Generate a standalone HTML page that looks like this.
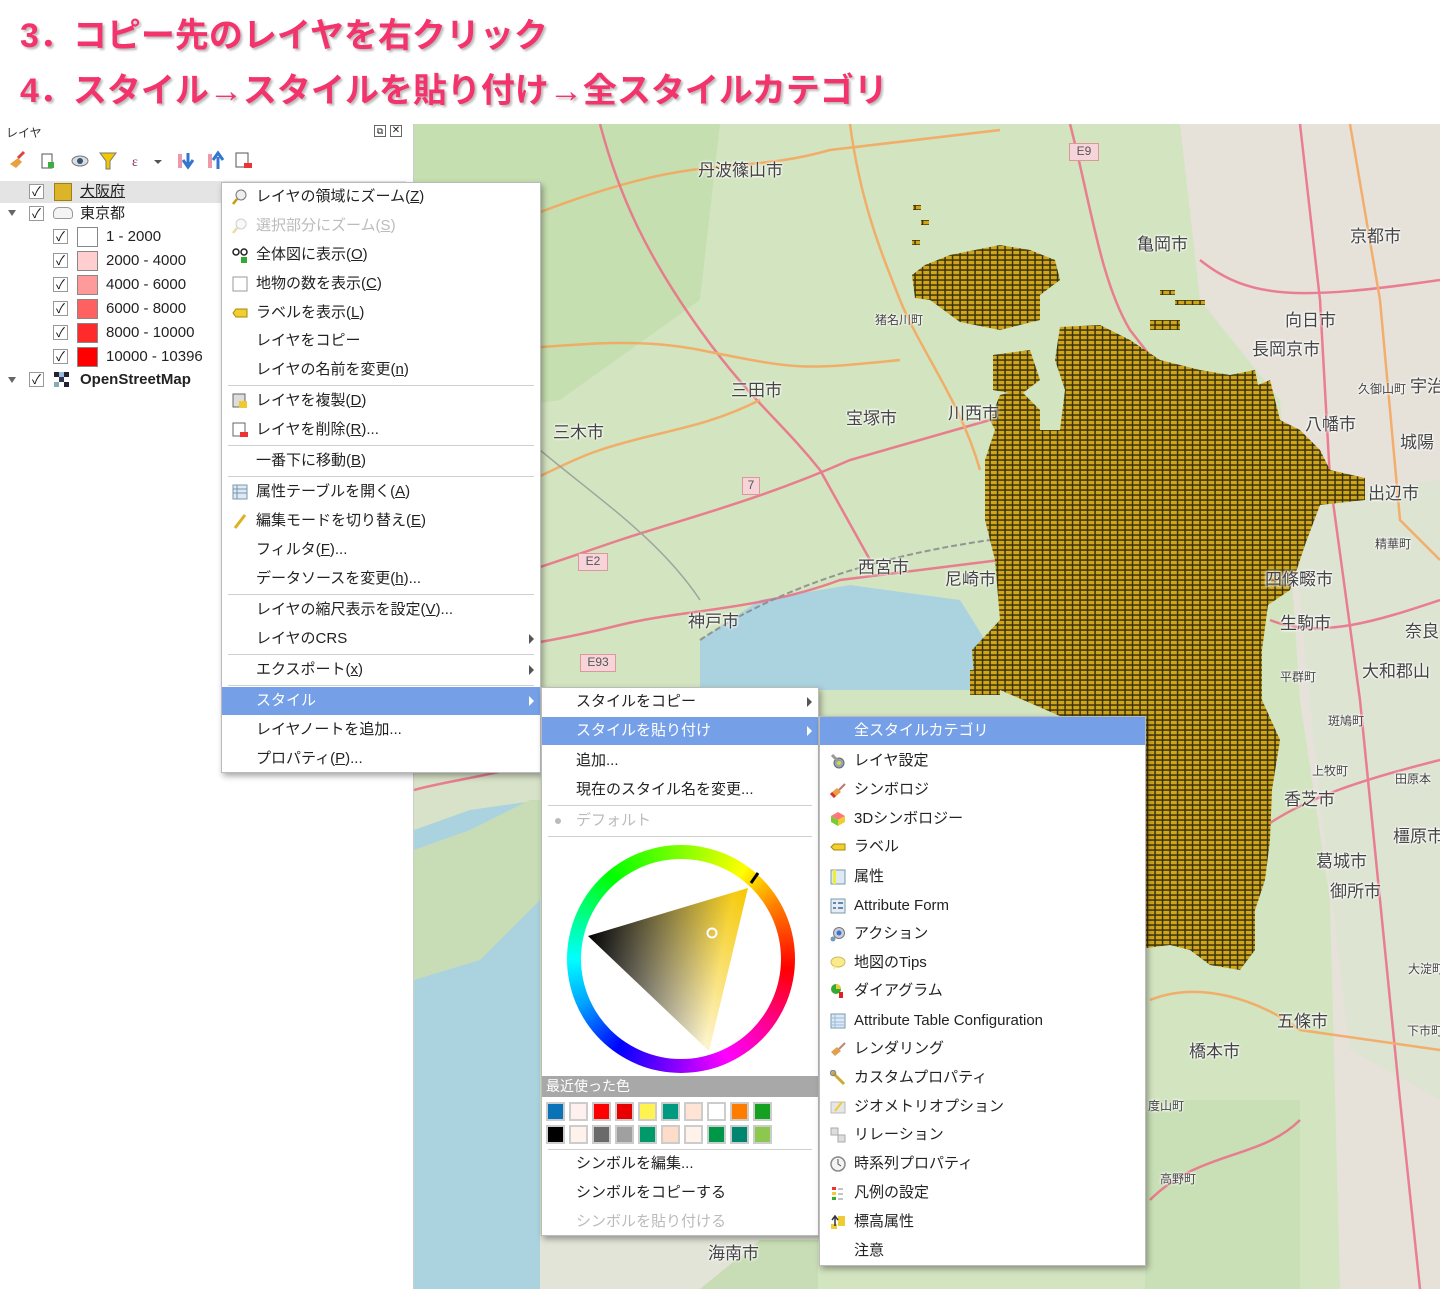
<!DOCTYPE html>
<html><head><meta charset="utf-8">
<style>
*{margin:0;padding:0;box-sizing:border-box}
body{width:1440px;height:1289px;position:relative;overflow:hidden;background:#fff;font-family:"Liberation Sans","Noto Sans CJK JP",sans-serif;color:#222}
.h{position:absolute;left:20px;font-size:34px;font-weight:bold;color:#f3336c;text-shadow:2px 2px 2px #bbb,-1px -1px 0 #fff;letter-spacing:0;font-family:"Liberation Sans","Noto Sans CJK JP",sans-serif}
.abs{position:absolute}
.panel{position:absolute;left:0;top:124px;width:414px;height:1165px;background:#fff;border-right:1px solid #ccc}
.ptitle{position:absolute;left:6px;top:124px;font-size:12px;color:#333}
.row{position:absolute;font-size:15px;height:22px;line-height:22px;white-space:nowrap}
.cb{position:absolute;width:15px;height:15px;border:1px solid #999;background:#fff;font-size:13px;line-height:13px;text-align:center;color:#111}
.sw{position:absolute;width:21px;height:20px;border:1px solid #888}
.menu{position:absolute;background:#fff;border:1px solid #bbb;box-shadow:2px 3px 6px rgba(0,0,0,.35)}
.mi{position:absolute;left:0;right:0;height:28px;line-height:28px;font-size:15px;white-space:nowrap;color:#222}
.mi span{position:absolute;left:34px}
.dis{color:#bbb}
.hl{background:#75a0e8;color:#fff}
.sep{position:absolute;left:6px;right:6px;height:1px;background:#cfcfcf}
.arr{position:absolute;right:6px;top:9px;width:0;height:0;border-left:5px solid #555;border-top:5px solid transparent;border-bottom:5px solid transparent}
.hl .arr{border-left-color:#fff}
.ic{position:absolute;left:10px;top:6px;width:16px;height:16px}
.lbl{position:absolute;font-size:17px;color:#444;text-shadow:0 0 3px #fff,0 0 3px #fff,0 0 2px #fff;white-space:nowrap}
.sl{font-size:12px}
.sq{position:absolute;width:19px;height:19px;border:2px solid #ccc}
</style></head><body>
<div class="h" style="top:8px">3．コピー先のレイヤを右クリック</div>
<div class="h" style="top:63px">4．スタイル→スタイルを貼り付け→全スタイルカテゴリ</div>

<!-- map -->
<svg class="abs" style="left:414px;top:124px" width="1026" height="1165" viewBox="414 124 1026 1165">
<defs>
<pattern id="g" x="0" y="0" width="7.5" height="5" patternUnits="userSpaceOnUse">
<rect width="7.5" height="5" fill="#3b3310"/><rect x="0.8" y="0.8" width="6" height="3.5" fill="#d0a618"/>
</pattern>
</defs>
<rect x="414" y="124" width="1026" height="1165" fill="#d3e4c0"/>
<path d="M414 124 L720 124 L700 300 L560 400 L414 420Z" fill="#c6dfb0"/>
<path d="M1180 124 L1440 124 L1440 1289 L1340 1289 L1330 900 L1300 700 L1280 400 L1200 300Z" fill="#e6e2da"/>
<path d="M1290 500 L1440 480 L1440 1100 L1350 1050 L1320 800Z" fill="#dde4d2"/>
<path d="M700 640 L760 600 L850 585 L960 600 L985 640 L985 690 L820 690 L700 690Z" fill="#aad3df"/>
<path d="M414 800 L440 780 L520 770 L540 760 L540 1289 L414 1289Z" fill="#aad3df"/>
<path d="M414 770 L470 775 L520 765 L540 772 L540 800 L470 810 L414 830Z" fill="#d8e2c8"/>
<path d="M414 850 L470 830 L530 800 L540 800 L540 900 L480 960 L414 980Z" fill="#c8ddb5"/>
<path d="M540 1235 L818 1235 L818 1289 L540 1289Z" fill="#e3e4d8"/>
<path d="M760 1240 L818 1240 L818 1289 L700 1289Z" fill="#c8ddb5"/>
<path d="M1145 1100 L1300 1100 L1300 1289 L1145 1289Z" fill="#c9dfb6"/>
<g fill="none" stroke-width="2.5" opacity="0.85">
<path d="M414 260 C500 230 560 200 640 180 S760 170 830 150 L1000 130" stroke="#f6a55a"/>
<path d="M600 124 C620 200 650 260 700 330 S780 420 820 470 L870 560" stroke="#ec6c86"/>
<path d="M414 600 C480 590 560 560 620 540 S760 500 850 460 L990 420" stroke="#ec6c86"/>
<path d="M414 660 C500 650 560 640 620 625 S760 610 840 580 L1000 560" stroke="#ec6c86"/>
<path d="M414 500 C480 520 540 470 600 450 S700 430 760 400" stroke="#f6a55a"/>
<path d="M1070 124 C1090 200 1100 280 1130 330 L1200 420" stroke="#ec6c86"/>
<path d="M1200 260 C1250 300 1300 300 1440 280" stroke="#ec6c86"/>
<path d="M1300 124 L1320 300 L1330 480 L1360 700 L1380 900 L1400 1100 L1420 1289" stroke="#ec6c86"/>
<path d="M1260 830 C1300 800 1360 780 1440 760" stroke="#ec6c86"/>
<path d="M1270 620 C1320 640 1380 620 1440 600" stroke="#ec6c86"/>
<path d="M1150 1000 C1200 980 1260 1000 1300 1030 L1440 1050" stroke="#f6a55a"/>
<path d="M1150 1200 C1200 1150 1260 1160 1300 1120" stroke="#ec6c86"/>
<path d="M850 124 C860 200 880 250 900 300 S960 400 980 470" stroke="#f6a55a"/>
<path d="M414 350 C500 360 600 330 700 350 S800 370 900 360" stroke="#f6a55a"/>
<path d="M414 790 C450 780 500 775 540 760" stroke="#ec6c86"/>
<path d="M540 450 C600 500 660 540 700 600" stroke="#999" stroke-width="1.5"/>
<path d="M700 640 C760 600 850 560 990 540" stroke="#888" stroke-width="2" stroke-dasharray="6 3"/>
<path d="M1350 124 L1380 300 L1400 520 L1440 560" stroke="#f6a55a"/>
</g>
<g fill="url(#g)">
<path d="M985 460 L995 430 L1060 430 L1065 390 L1055 360 L1060 327 L1100 325 L1130 340 L1160 360 L1200 370 L1230 375 L1255 370 L1258 385 L1270 380 L1280 420 L1300 430 L1320 450 L1330 470 L1365 478 L1365 500 L1320 505 L1305 545 L1290 590 L1268 605 L1262 650 L1262 700 L1280 740 L1272 790 L1270 840 L1265 880 L1255 910 L1255 950 L1240 970 L1210 965 L1190 950 L1170 945 L1146 948 L1146 716 L1060 716 L1000 690 L975 690 L972 650 L1000 620 L995 560 L985 520Z"/>
<path d="M912 275 L925 265 L950 255 L1000 245 L1030 250 L1055 260 L1060 280 L1040 295 L1040 320 L1000 330 L960 322 L930 300 L915 298Z"/>
<path d="M993 355 L1030 350 L1040 380 L1020 395 L993 390Z"/>
<path d="M1000 395 L1020 390 L1040 410 L1040 430 L1000 440 L990 420Z"/>
<rect x="913" y="205" width="8" height="5"/><rect x="921" y="220" width="8" height="5"/><rect x="912" y="240" width="8" height="5"/>
<rect x="1160" y="290" width="15" height="5"/><rect x="1175" y="300" width="30" height="5"/><rect x="1150" y="320" width="30" height="10"/>
<rect x="970" y="670" width="30" height="25"/>
</g>
</svg>

<div class="lbl" style="left:698px;top:156px">丹波篠山市</div>
<div class="lbl" style="left:1137px;top:230px">亀岡市</div>
<div class="lbl" style="left:1350px;top:222px">京都市</div>
<div class="lbl" style="left:1285px;top:306px">向日市</div>
<div class="lbl" style="left:1252px;top:335px">長岡京市</div>
<div class="lbl sl" style="left:875px;top:311px">猪名川町</div>
<div class="lbl" style="left:731px;top:376px">三田市</div>
<div class="lbl" style="left:846px;top:404px">宝塚市</div>
<div class="lbl" style="left:948px;top:399px">川西市</div>
<div class="lbl" style="left:553px;top:418px">三木市</div>
<div class="lbl sl" style="left:1358px;top:380px">久御山町</div>
<div class="lbl" style="left:1410px;top:372px">宇治</div>
<div class="lbl" style="left:1305px;top:410px">八幡市</div>
<div class="lbl" style="left:1400px;top:428px">城陽</div>
<div class="lbl" style="left:1368px;top:479px">出辺市</div>
<div class="lbl sl" style="left:1375px;top:535px">精華町</div>
<div class="lbl" style="left:858px;top:553px">西宮市</div>
<div class="lbl" style="left:945px;top:565px">尼崎市</div>
<div class="lbl" style="left:1265px;top:565px">四條畷市</div>
<div class="lbl" style="left:688px;top:607px">神戸市</div>
<div class="lbl" style="left:1280px;top:609px">生駒市</div>
<div class="lbl" style="left:1405px;top:617px">奈良</div>
<div class="lbl" style="left:1362px;top:657px">大和郡山</div>
<div class="lbl sl" style="left:1280px;top:668px">平群町</div>
<div class="lbl sl" style="left:1328px;top:712px">斑鳩町</div>
<div class="lbl sl" style="left:1312px;top:762px">上牧町</div>
<div class="lbl sl" style="left:1395px;top:770px">田原本</div>
<div class="lbl" style="left:1284px;top:785px">香芝市</div>
<div class="lbl" style="left:1393px;top:822px">橿原市</div>
<div class="lbl" style="left:1316px;top:847px">葛城市</div>
<div class="lbl" style="left:1330px;top:877px">御所市</div>
<div class="lbl sl" style="left:1408px;top:960px">大淀町</div>
<div class="lbl" style="left:1277px;top:1007px">五條市</div>
<div class="lbl sl" style="left:1407px;top:1022px">下市町</div>
<div class="lbl" style="left:1189px;top:1037px">橋本市</div>
<div class="lbl sl" style="left:1148px;top:1097px">度山町</div>
<div class="lbl sl" style="left:1160px;top:1170px">高野町</div>
<div class="lbl" style="left:708px;top:1239px">海南市</div>
<div class="abs" style="left:1069px;top:143px;width:30px;height:18px;background:#f7d4da;border:1px solid #d99;font-size:12px;text-align:center;color:#555">E9</div>
<div class="abs" style="left:578px;top:553px;width:30px;height:18px;background:#f7d4da;border:1px solid #d99;font-size:12px;text-align:center;color:#555">E2</div>
<div class="abs" style="left:580px;top:654px;width:36px;height:18px;background:#f7d4da;border:1px solid #d99;font-size:12px;text-align:center;color:#555">E93</div>
<div class="abs" style="left:742px;top:477px;width:18px;height:18px;background:#f7d4da;border:1px solid #d99;font-size:12px;text-align:center;color:#555">7</div>

<div class="panel"></div>
<div class="ptitle">レイヤ</div>
<div class="abs" style="left:374px;top:125px;width:12px;height:12px;border:1px solid #666;font-size:9px;line-height:10px;text-align:center">⧉</div>
<div class="abs" style="left:390px;top:125px;width:12px;height:12px;border:1px solid #666;font-size:10px;line-height:10px;text-align:center">✕</div>
<svg class="abs" style="left:8px;top:150px" width="250" height="22">
<path d="M2 14 L10 8 L14 12 L8 18Z" fill="#e8a040"/><path d="M10 8 L16 2" stroke="#d44" stroke-width="3"/>
<rect x="34" y="4" width="10" height="14" fill="none" stroke="#555"/><rect x="40" y="12" width="6" height="6" fill="#4a4"/>
<ellipse cx="72" cy="11" rx="8" ry="5" fill="#ddd" stroke="#777"/><circle cx="72" cy="11" r="3" fill="#357"/>
<path d="M92 3 L108 3 L102 11 L102 19 L98 19 L98 11Z" fill="#f2c800" stroke="#777"/>
<text x="124" y="16" font-size="14" fill="#836" font-family="Liberation Serif">ε</text><path d="M146 10 L154 10 L150 14Z" fill="#555"/>
<rect x="170" y="4" width="4" height="14" fill="#e9a"/><path d="M180 3 L180 14 M175 10 L180 17 L185 10" stroke="#37c" stroke-width="3" fill="none"/>
<rect x="200" y="4" width="4" height="14" fill="#e9a"/><path d="M210 19 L210 7 M205 10 L210 3 L215 10" stroke="#37c" stroke-width="3" fill="none"/>
<rect x="228" y="3" width="12" height="14" fill="#fff" stroke="#555"/><rect x="236" y="13" width="8" height="5" fill="#e33"/>
</svg>
<div class="abs" style="left:0;top:181px;width:406px;height:22px;background:#e4e4e4"></div>
<div class="cb" style="left:29px;top:184px">✓</div><div class="abs" style="left:54px;top:183px;width:18px;height:18px;background:#dbb42a;border:1px solid #a08010"></div>
<div class="row" style="left:80px;top:181px;text-decoration:underline">大阪府</div>
<div class="abs" style="left:8px;top:210px;border-top:6px solid #666;border-left:4px solid transparent;border-right:4px solid transparent"></div>
<div class="cb" style="left:29px;top:206px">✓</div>
<div class="abs" style="left:53px;top:207px;width:20px;height:12px;border:1px solid #999;border-radius:6px 6px 3px 3px;background:#f4f4f4"></div>
<div class="row" style="left:80px;top:203px">東京都</div>
<div class="cb" style="left:53px;top:229px">✓</div><div class="sw" style="left:77px;top:227px;background:#fff"></div><div class="row" style="left:106px;top:226px">1 - 2000</div>
<div class="cb" style="left:53px;top:253px">✓</div><div class="sw" style="left:77px;top:251px;background:#ffcfcf"></div><div class="row" style="left:106px;top:250px">2000 - 4000</div>
<div class="cb" style="left:53px;top:277px">✓</div><div class="sw" style="left:77px;top:275px;background:#ff9a9a"></div><div class="row" style="left:106px;top:274px">4000 - 6000</div>
<div class="cb" style="left:53px;top:301px">✓</div><div class="sw" style="left:77px;top:299px;background:#ff6060"></div><div class="row" style="left:106px;top:298px">6000 - 8000</div>
<div class="cb" style="left:53px;top:325px">✓</div><div class="sw" style="left:77px;top:323px;background:#ff2a2a"></div><div class="row" style="left:106px;top:322px">8000 - 10000</div>
<div class="cb" style="left:53px;top:349px">✓</div><div class="sw" style="left:77px;top:347px;background:#ff0000"></div><div class="row" style="left:106px;top:346px">10000 - 10396</div>
<div class="abs" style="left:8px;top:377px;border-top:6px solid #666;border-left:4px solid transparent;border-right:4px solid transparent"></div>
<div class="cb" style="left:29px;top:372px">✓</div>
<svg class="abs" style="left:54px;top:372px" width="16" height="16"><rect x="0" y="0" width="5" height="5" fill="#223"/><rect x="10" y="0" width="5" height="5" fill="#223"/><rect x="5" y="5" width="5" height="5" fill="#335"/><rect x="0" y="10" width="5" height="5" fill="#8ab"/><rect x="10" y="10" width="5" height="5" fill="#223"/><rect x="5" y="0" width="5" height="5" fill="#9bd"/></svg>
<div class="row" style="left:80px;top:369px;font-weight:bold">OpenStreetMap</div>

<div class="menu" style="left:221px;top:182px;width:320px;height:591px">
<div class="mi" style="top:0"><svg class="ic" viewBox="0 0 16 16"><circle cx="9" cy="6" r="5" fill="#eee" stroke="#777"/><path d="M5 10 L1 15" stroke="#c90" stroke-width="2.5"/></svg><span>レイヤの領域にズーム(<u>Z</u>)</span></div>
<div class="mi dis" style="top:29px"><svg class="ic" viewBox="0 0 16 16" opacity=".35"><circle cx="9" cy="6" r="5" fill="#eee" stroke="#777"/><path d="M5 10 L1 15" stroke="#c90" stroke-width="2.5"/></svg><span>選択部分にズーム(<u>S</u>)</span></div>
<div class="mi" style="top:58px"><svg class="ic" viewBox="0 0 16 16"><circle cx="4" cy="5" r="3" fill="none" stroke="#222" stroke-width="1.5"/><circle cx="12" cy="5" r="3" fill="none" stroke="#222" stroke-width="1.5"/><rect x="9" y="10" width="6" height="6" fill="#3a3"/></svg><span>全体図に表示(<u>O</u>)</span></div>
<div class="mi" style="top:87px"><svg class="ic" viewBox="0 0 16 16"><rect x="1" y="1" width="14" height="14" fill="#fff" stroke="#999"/></svg><span>地物の数を表示(<u>C</u>)</span></div>
<div class="mi" style="top:116px"><svg class="ic" viewBox="0 0 16 16"><path d="M1 8 L4 4 L15 4 L15 12 L4 12Z" fill="#f0d030" stroke="#a80"/></svg><span>ラベルを表示(<u>L</u>)</span></div>
<div class="mi" style="top:144px"><span>レイヤをコピー</span></div>
<div class="mi" style="top:173px"><span>レイヤの名前を変更(<u>n</u>)</span></div>
<div class="sep" style="top:202px"></div>
<div class="mi" style="top:204px"><svg class="ic" viewBox="0 0 16 16"><rect x="1" y="1" width="12" height="13" fill="#ddd" stroke="#666"/><rect x="7" y="8" width="8" height="7" fill="#f2c830"/></svg><span>レイヤを複製(<u>D</u>)</span></div>
<div class="mi" style="top:233px"><svg class="ic" viewBox="0 0 16 16"><rect x="1" y="1" width="12" height="13" fill="#fff" stroke="#666"/><rect x="8" y="10" width="8" height="5" fill="#e33"/></svg><span>レイヤを削除(<u>R</u>)...</span></div>
<div class="sep" style="top:262px"></div>
<div class="mi" style="top:264px"><span>一番下に移動(<u>B</u>)</span></div>
<div class="sep" style="top:293px"></div>
<div class="mi" style="top:295px"><svg class="ic" viewBox="0 0 16 16"><rect x="1" y="1" width="14" height="14" fill="#dfe9f5" stroke="#79a"/><path d="M1 5 H15 M1 9 H15 M5 1 V15" stroke="#79a"/></svg><span>属性テーブルを開く(<u>A</u>)</span></div>
<div class="mi" style="top:324px"><svg class="ic" viewBox="0 0 16 16"><path d="M3 15 L13 2" stroke="#e0b020" stroke-width="3"/></svg><span>編集モードを切り替え(<u>E</u>)</span></div>
<div class="mi" style="top:353px"><span>フィルタ(<u>F</u>)...</span></div>
<div class="mi" style="top:382px"><span>データソースを変更(<u>h</u>)...</span></div>
<div class="sep" style="top:411px"></div>
<div class="mi" style="top:413px"><span>レイヤの縮尺表示を設定(<u>V</u>)...</span></div>
<div class="mi" style="top:442px"><span>レイヤのCRS</span><i class="arr"></i></div>
<div class="sep" style="top:471px"></div>
<div class="mi" style="top:473px"><span>エクスポート(<u>x</u>)</span><i class="arr"></i></div>
<div class="sep" style="top:502px"></div>
<div class="mi hl" style="top:504px"><span>スタイル</span><i class="arr"></i></div>
<div class="mi" style="top:533px"><span>レイヤノートを追加...</span></div>
<div class="mi" style="top:562px"><span>プロパティ(<u>P</u>)...</span></div>
</div>

<div class="menu" style="left:541px;top:687px;width:278px;height:549px">
<div class="mi" style="top:0"><span>スタイルをコピー</span><i class="arr"></i></div>
<div class="mi hl" style="top:29px"><span>スタイルを貼り付け</span><i class="arr"></i></div>
<div class="mi" style="top:59px"><span>追加...</span></div>
<div class="mi" style="top:88px"><span>現在のスタイル名を変更...</span></div>
<div class="sep" style="top:117px"></div>
<div class="mi dis" style="top:119px"><i class="abs" style="left:13px;top:11px;width:6px;height:6px;border-radius:3px;background:#bbb"></i><span>デフォルト</span></div>
<div class="sep" style="top:148px"></div>
<div class="abs" style="left:25px;top:157px;width:228px;height:228px;border-radius:50%;background:conic-gradient(#80ff00,#ffff00 35deg,#ff8000 60deg,#ff0000 95deg,#ff00a0 130deg,#ff00ff 155deg,#8000ff 185deg,#0000ff 215deg,#00a0ff 245deg,#00ffff 270deg,#00ff80 295deg,#00ff00 320deg,#80ff00 360deg)"></div>
<div class="abs" style="left:39px;top:171px;width:200px;height:200px;border-radius:50%;background:#fff"></div>
<svg class="abs" style="left:0;top:0" width="278" height="549">
<defs><linearGradient id="t1" x1="747" y1="887" x2="620" y2="1000" gradientUnits="userSpaceOnUse"><stop offset="0" stop-color="#f5c800"/><stop offset="1" stop-color="#f5c800" stop-opacity="0"/></linearGradient>
<linearGradient id="t2" x1="587" y1="935" x2="720" y2="960" gradientUnits="userSpaceOnUse"><stop offset="0" stop-color="#000"/><stop offset="1" stop-color="#000" stop-opacity="0"/></linearGradient></defs>
<g transform="translate(-541,-687)">
<polygon points="747,887 587,935 708,1050" fill="#fff"/>
<polygon points="747,887 587,935 708,1050" fill="url(#t1)"/>
<polygon points="747,887 587,935 708,1050" fill="url(#t2)"/>
<line x1="750" y1="882" x2="757" y2="872" stroke="#000" stroke-width="3"/>
<circle cx="711" cy="932" r="4.5" fill="none" stroke="#fff" stroke-width="2"/>
</g></svg>
<div class="abs" style="left:0;top:388px;width:276px;height:21px;background:#a8a8a8;color:#fff;font-size:14px;line-height:21px;padding-left:4px">最近使った色</div>
<div class="sq" style="left:4px;top:414px;background:#0a73b8"></div>
<div class="sq" style="left:27px;top:414px;background:#fff0f0"></div>
<div class="sq" style="left:50px;top:414px;background:#ff0000"></div>
<div class="sq" style="left:73px;top:414px;background:#e80000"></div>
<div class="sq" style="left:96px;top:414px;background:#fff350"></div>
<div class="sq" style="left:119px;top:414px;background:#009a80"></div>
<div class="sq" style="left:142px;top:414px;background:#ffe4d6"></div>
<div class="sq" style="left:165px;top:414px;background:#fff"></div>
<div class="sq" style="left:188px;top:414px;background:#ff7c00"></div>
<div class="sq" style="left:211px;top:414px;background:#14a020"></div>
<div class="sq" style="left:4px;top:437px;background:#000"></div>
<div class="sq" style="left:27px;top:437px;background:#fff2ea"></div>
<div class="sq" style="left:50px;top:437px;background:#6a6a6a"></div>
<div class="sq" style="left:73px;top:437px;background:#a0a0a0"></div>
<div class="sq" style="left:96px;top:437px;background:#009a6a"></div>
<div class="sq" style="left:119px;top:437px;background:#ffdcc8"></div>
<div class="sq" style="left:142px;top:437px;background:#fff2ea"></div>
<div class="sq" style="left:165px;top:437px;background:#009848"></div>
<div class="sq" style="left:188px;top:437px;background:#008570"></div>
<div class="sq" style="left:211px;top:437px;background:#8cc850"></div>
<div class="sep" style="top:461px"></div>
<div class="mi" style="top:462px"><span>シンボルを編集...</span></div>
<div class="mi" style="top:491px"><span>シンボルをコピーする</span></div>
<div class="mi dis" style="top:520px"><span>シンボルを貼り付ける</span></div>
</div>

<div class="menu" style="left:819px;top:716px;width:327px;height:550px">
<div class="mi hl" style="top:0"><span>全スタイルカテゴリ</span></div>
<div class="mi" style="top:30px"><svg class="ic" viewBox="0 0 16 16"><circle cx="9" cy="10" r="5" fill="#8ab" stroke="#666"/><path d="M2 2 L9 9" stroke="#999" stroke-width="3"/><circle cx="9" cy="10" r="2" fill="#ec3"/></svg><span>レイヤ設定</span></div>
<div class="mi" style="top:59px"><svg class="ic" viewBox="0 0 16 16"><path d="M1 11 L7 6 L11 10 L5 15Z" fill="#e8a040"/><path d="M1 11 L5 15" stroke="#d33" stroke-width="3"/><path d="M9 8 L15 2" stroke="#b77" stroke-width="2"/></svg><span>シンボロジ</span></div>
<div class="mi" style="top:88px"><svg class="ic" viewBox="0 0 16 16"><path d="M8 1 L15 5 L8 9 L1 5Z" fill="#f77"/><path d="M1 5 L8 9 L8 15 L1 11Z" fill="#7c3"/><path d="M15 5 L8 9 L8 15 L15 11Z" fill="#ec3"/></svg><span>3Dシンボロジー</span></div>
<div class="mi" style="top:116px"><svg class="ic" viewBox="0 0 16 16"><path d="M1 8 L4 5 L15 5 L15 11 L4 11Z" fill="#f0d030" stroke="#a80"/></svg><span>ラベル</span></div>
<div class="mi" style="top:146px"><svg class="ic" viewBox="0 0 16 16"><rect x="1" y="1" width="14" height="14" fill="#dfe9f5" stroke="#79a"/><rect x="3" y="1" width="3" height="14" fill="#ee3"/></svg><span>属性</span></div>
<div class="mi" style="top:175px"><svg class="ic" viewBox="0 0 16 16"><rect x="1" y="1" width="14" height="14" fill="#e4ecf6" stroke="#79a"/><path d="M3 5 H6 M3 10 H6 M8 5 H13 M8 10 H13" stroke="#68a" stroke-width="2"/></svg><span>Attribute Form</span></div>
<div class="mi" style="top:203px"><svg class="ic" viewBox="0 0 16 16"><circle cx="9" cy="7" r="5.5" fill="#ccd" stroke="#777"/><circle cx="9" cy="7" r="2.5" fill="#37c"/><circle cx="3" cy="13" r="2.5" fill="#79b"/></svg><span>アクション</span></div>
<div class="mi" style="top:232px"><svg class="ic" viewBox="0 0 16 16"><ellipse cx="8" cy="7" rx="7" ry="5" fill="#fbeb88" stroke="#cb6"/><path d="M4 11 L3 15 L7 12" fill="#fbeb88"/></svg><span>地図のTips</span></div>
<div class="mi" style="top:260px"><svg class="ic" viewBox="0 0 16 16"><circle cx="6" cy="6" r="5" fill="#3a3"/><path d="M6 6 L6 1 A5 5 0 0 1 11 6Z" fill="#ec3"/><rect x="9" y="9" width="4" height="6" fill="#d22"/></svg><span>ダイアグラム</span></div>
<div class="mi" style="top:290px"><svg class="ic" viewBox="0 0 16 16"><rect x="1" y="1" width="14" height="14" fill="#dfe9f5" stroke="#79a"/><path d="M1 5 H15 M1 9 H15 M1 12 H15 M5 1 V15" stroke="#9bd"/></svg><span>Attribute Table Configuration</span></div>
<div class="mi" style="top:318px"><svg class="ic" viewBox="0 0 16 16"><path d="M1 11 L7 6 L11 10 L5 15Z" fill="#e0a050"/><path d="M9 8 L15 2" stroke="#b87" stroke-width="2"/></svg><span>レンダリング</span></div>
<div class="mi" style="top:347px"><svg class="ic" viewBox="0 0 16 16"><path d="M2 2 L14 14" stroke="#ca3" stroke-width="3"/><circle cx="3" cy="3" r="2.5" fill="none" stroke="#888" stroke-width="1.5"/></svg><span>カスタムプロパティ</span></div>
<div class="mi" style="top:376px"><svg class="ic" viewBox="0 0 16 16"><rect x="1" y="3" width="14" height="11" fill="#e6e6e6" stroke="#bbb"/><path d="M5 12 L12 3" stroke="#ec3" stroke-width="2"/></svg><span>ジオメトリオプション</span></div>
<div class="mi" style="top:404px"><svg class="ic" viewBox="0 0 16 16"><rect x="1" y="1" width="7" height="7" fill="#ddd" stroke="#aaa"/><rect x="8" y="8" width="7" height="7" fill="#ddd" stroke="#aaa"/></svg><span>リレーション</span></div>
<div class="mi" style="top:433px"><svg class="ic" viewBox="0 0 16 16"><circle cx="8" cy="8" r="7" fill="#f4f4f4" stroke="#888" stroke-width="1.5"/><path d="M8 3 V8 L11 10" stroke="#555" fill="none"/></svg><span>時系列プロパティ</span></div>
<div class="mi" style="top:462px"><svg class="ic" viewBox="0 0 16 16"><rect x="2" y="2" width="4" height="3" fill="#e33"/><rect x="2" y="7" width="4" height="3" fill="#ec3"/><rect x="2" y="12" width="4" height="3" fill="#3a3"/><path d="M8 4 H13 M8 9 H13 M8 14 H13" stroke="#888"/></svg><span>凡例の設定</span></div>
<div class="mi" style="top:491px"><svg class="ic" viewBox="0 0 16 16"><rect x="1" y="10" width="6" height="5" fill="#ec3"/><rect x="8" y="2" width="7" height="10" fill="#ec3"/><path d="M5 12 V3 M2 6 L5 2 L8 6" stroke="#333" fill="none" stroke-width="1.5"/></svg><span>標高属性</span></div>
<div class="mi" style="top:520px"><span>注意</span></div>
</div>
</body></html>
